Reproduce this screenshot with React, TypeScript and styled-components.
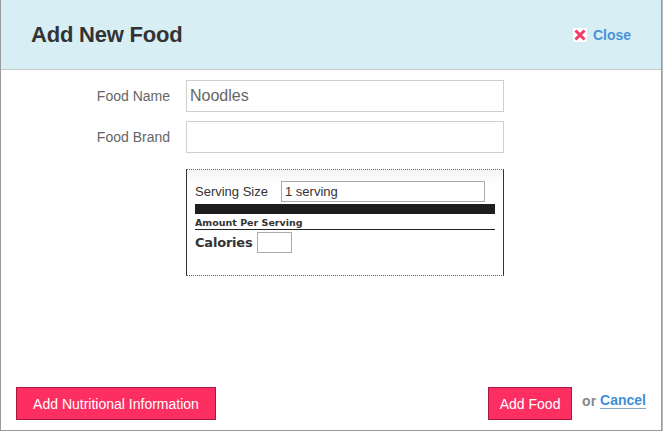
import React from "react";
import styled, { createGlobalStyle } from "styled-components";

const Global = createGlobalStyle`
  html, body { margin: 0; padding: 0; }
  body { background: #b9b9b9; font-family: "Liberation Sans", Arial, sans-serif; }
`;

const Modal = styled.div`
  box-sizing: border-box;
  width: 662px;
  height: 431px;
  background: #fff;
  border: 1px solid #9a9a9a;
  border-top: none;
  display: flex;
  flex-direction: column;
`;

const Header = styled.div`
  box-sizing: border-box;
  height: 70px;
  background: #d6eef4;
  border-bottom: 1px solid #c8c8c8;
  display: flex;
  align-items: center;
  justify-content: space-between;
  padding: 0 30px 0 30px;
`;

const Title = styled.h1`
  margin: 0;
  font-family: "Liberation Sans", Arial, sans-serif;
  font-size: 22px;
  font-weight: bold;
  color: #333;
  letter-spacing: -0.2px;
`;

const CloseLink = styled.a`
  display: flex;
  align-items: center;
  gap: 6px;
  font-size: 14px;
  font-weight: bold;
  color: #4a92d6;
  text-decoration: none;
  cursor: pointer;
`;

const Body = styled.div`
  display: grid;
  grid-template-columns: 169px 318px;
  column-gap: 16px;
  row-gap: 9px;
  padding-top: 10px;
  align-items: center;
`;

const Label = styled.label`
  text-align: right;
  font-size: 14px;
  color: #666;
`;

const TextInput = styled.input`
  box-sizing: border-box;
  width: 318px;
  height: 32px;
  border: 1px solid #cfcfcf;
  padding: 0 3px;
  font-family: "Liberation Sans", Arial, sans-serif;
  font-size: 16px;
  color: #666;
  outline: none;
`;

const NutritionBox = styled.div`
  grid-column: 2;
  margin-top: 7px;
  box-sizing: border-box;
  width: 318px;
  height: 107px;
  border-left: 1px solid #333;
  border-right: 1px solid #333;
  border-top: 1px dotted #666;
  border-bottom: 1px dotted #666;
  background: linear-gradient(#f4f4f4, #fff 14px);
  padding: 11px 8px 0 8px;
  display: flex;
  flex-direction: column;
`;

const ServingRow = styled.div`
  display: flex;
  align-items: center;
  gap: 13px;
  font-size: 13px;
  color: #333;
`;

const SmallInput = styled.input<{ $w: number }>`
  box-sizing: border-box;
  width: ${(p) => p.$w}px;
  height: 21px;
  border: 1px solid #aaa;
  padding: 0 3px;
  font-family: "Liberation Sans", Arial, sans-serif;
  font-size: 13px;
  color: #333;
  outline: none;
`;

const ThickBar = styled.div`
  height: 10px;
  background: #1e1e1e;
  margin-top: 2px;
`;

const AmountLine = styled.div`
  font-family: "DejaVu Sans", Verdana, sans-serif;
  font-size: 9.5px;
  font-weight: bold;
  color: #333;
  padding: 3px 0 1px;
  border-bottom: 1px solid #222;
`;

const CaloriesRow = styled.div`
  display: flex;
  align-items: center;
  gap: 4px;
  margin-top: 2px;
  font-family: "DejaVu Sans", Verdana, sans-serif;
  font-size: 13px;
  font-weight: bold;
  color: #333;
  letter-spacing: -0.2px;
`;

const Footer = styled.div`
  margin-top: auto;
  display: flex;
  justify-content: space-between;
  align-items: center;
  padding: 0 15px 10px 15px;
`;

const PinkButton = styled.button<{ $w: number }>`
  box-sizing: border-box;
  width: ${(p) => p.$w}px;
  height: 33px;
  background: #fd2e62;
  border: 1px solid #a8173f;
  color: #fff;
  font-family: "Liberation Sans", Arial, sans-serif;
  font-size: 14px;
  padding: 0;
  cursor: pointer;
`;

const RightGroup = styled.div`
  display: flex;
  align-items: center;
`;

const OrText = styled.span`
  margin-left: 10px;
  font-size: 14px;
  font-weight: bold;
  color: #888;
  margin-top: -5px;
`;

const CancelLink = styled.a`
  margin-left: 4px;
  margin-top: -5px;
  font-size: 14px;
  font-weight: bold;
  color: #3f8fd8;
  text-decoration: none;
  border-bottom: 1px solid #8aa7c4;
  line-height: 15px;
  cursor: pointer;
`;

const CloseIcon = () => (
  <svg width="14" height="14" viewBox="0 0 14 14">
    <rect width="14" height="14" fill="#fff" />
    <path d="M3.5 3.5 L10.5 10.5 M10.5 3.5 L3.5 10.5" stroke="#f23d68" strokeWidth="3" strokeLinecap="square" />
  </svg>
);

export default function App() {
  return (
    <>
      <Global />
      <Modal>
        <Header>
          <Title>Add New Food</Title>
          <CloseLink>
            <CloseIcon />
            Close
          </CloseLink>
        </Header>
        <Body>
          <Label>Food Name</Label>
          <TextInput defaultValue="Noodles" />
          <Label>Food Brand</Label>
          <TextInput defaultValue="" />
          <NutritionBox>
            <ServingRow>
              Serving Size
              <SmallInput $w={204} defaultValue="1 serving" />
            </ServingRow>
            <ThickBar />
            <AmountLine>Amount Per Serving</AmountLine>
            <CaloriesRow>
              Calories
              <SmallInput $w={35} defaultValue="" />
            </CaloriesRow>
          </NutritionBox>
        </Body>
        <Footer>
          <PinkButton $w={200}>Add Nutritional Information</PinkButton>
          <RightGroup>
            <PinkButton $w={84}>Add Food</PinkButton>
            <OrText>or</OrText>
            <CancelLink>Cancel</CancelLink>
          </RightGroup>
        </Footer>
      </Modal>
    </>
  );
}
